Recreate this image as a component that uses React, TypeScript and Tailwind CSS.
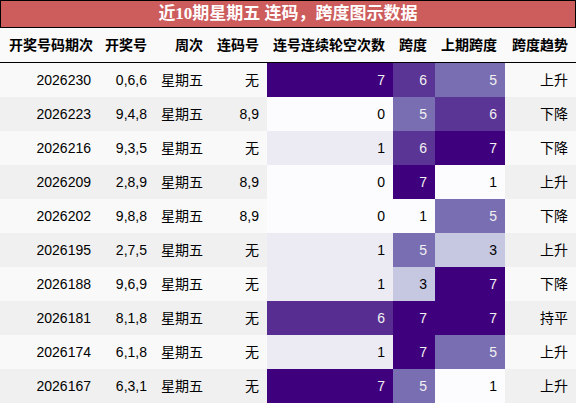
type Row = {
  issue: string;
  nums: string;
  week: string;
  pair: string;
  miss: number;
  span: number;
  prevSpan: number;
  trend: string;
};

const rows: Row[] = [
  { issue: '2026230', nums: '0,6,6', week: '星期五', pair: '无', miss: 7, span: 6, prevSpan: 5, trend: '上升' },
  { issue: '2026223', nums: '9,4,8', week: '星期五', pair: '8,9', miss: 0, span: 5, prevSpan: 6, trend: '下降' },
  { issue: '2026216', nums: '9,3,5', week: '星期五', pair: '无', miss: 1, span: 6, prevSpan: 7, trend: '下降' },
  { issue: '2026209', nums: '2,8,9', week: '星期五', pair: '8,9', miss: 0, span: 7, prevSpan: 1, trend: '上升' },
  { issue: '2026202', nums: '9,8,8', week: '星期五', pair: '8,9', miss: 0, span: 1, prevSpan: 5, trend: '下降' },
  { issue: '2026195', nums: '2,7,5', week: '星期五', pair: '无', miss: 1, span: 5, prevSpan: 3, trend: '上升' },
  { issue: '2026188', nums: '9,6,9', week: '星期五', pair: '无', miss: 1, span: 3, prevSpan: 7, trend: '下降' },
  { issue: '2026181', nums: '8,1,8', week: '星期五', pair: '无', miss: 6, span: 7, prevSpan: 7, trend: '持平' },
  { issue: '2026174', nums: '6,1,8', week: '星期五', pair: '无', miss: 1, span: 7, prevSpan: 5, trend: '上升' },
  { issue: '2026167', nums: '6,3,1', week: '星期五', pair: '无', miss: 7, span: 5, prevSpan: 1, trend: '上升' },
];

// Purples gradient, miss column scaled 0..7
const missColor: Record<number, string> = {
  0: 'bg-[#fcfbfd] text-black',
  1: 'bg-[#ecebf4] text-black',
  6: 'bg-[#572d92] text-[#f1f1f1]',
  7: 'bg-[#3f007d] text-[#f1f1f1]',
};

// span columns scaled 1..7
const spanColor: Record<number, string> = {
  1: 'bg-[#fcfbfd] text-black',
  3: 'bg-[#c6c7e1] text-black',
  5: 'bg-[#796eb2] text-[#f1f1f1]',
  6: 'bg-[#5b3596] text-[#f1f1f1]',
  7: 'bg-[#3f007d] text-[#f1f1f1]',
};

const headers = ['开奖号码期次', '开奖号', '周次', '连码号', '连号连续轮空次数', '跨度', '上期跨度', '跨度趋势'];

const grid = 'grid grid-cols-[101px_54px_56px_56px_126px_42px_70px_71px]';

export default function App() {
  return (
    <div className="w-[576px] h-[404px] overflow-hidden bg-white text-[14px] text-black" style={{ fontFamily: '"Liberation Sans", "Noto Sans CJK SC", sans-serif' }}>
      <div
        className="h-[28px] border border-black bg-[#cd5c5c] flex items-center justify-center text-white font-bold text-[17px]"
        style={{ fontFamily: '"Liberation Serif", "Noto Sans CJK SC", serif' }}
      >
        近10期星期五 连码，跨度图示数据
      </div>
      <div className={`${grid} h-[35px] bg-[#fafafa] border-b border-black font-bold`}>
        {headers.map((h) => (
          <div key={h} className="flex items-center justify-end pr-2">
            {h}
          </div>
        ))}
      </div>
      {rows.map((r, i) => (
        <div key={r.issue} className={`${grid} h-[34px] ${i % 2 === 0 ? 'bg-[#f9f9f9]' : 'bg-[#f0f0f0]'}`}>
          <div className="flex items-center justify-end pr-[10px]">{r.issue}</div>
          <div className="flex items-center justify-end pr-2">{r.nums}</div>
          <div className="flex items-center justify-end pr-2">{r.week}</div>
          <div className="flex items-center justify-end pr-2">{r.pair}</div>
          <div className={`flex items-center justify-end pr-2 ${missColor[r.miss]}`}>{r.miss}</div>
          <div className={`flex items-center justify-end pr-2 ${spanColor[r.span]}`}>{r.span}</div>
          <div className={`flex items-center justify-end pr-2 ${spanColor[r.prevSpan]}`}>{r.prevSpan}</div>
          <div className="flex items-center justify-end pr-2">{r.trend}</div>
        </div>
      ))}
    </div>
  );
}
